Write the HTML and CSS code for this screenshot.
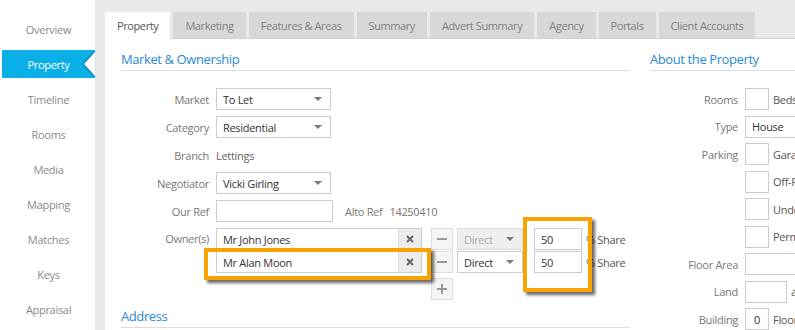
FILE: index.html
```html
<!DOCTYPE html>
<html lang="en">
<head>
    <meta charset="UTF-8">
    <meta name="viewport" content="width=device-width, initial-scale=1.0">
    <title>Property - Alto</title>
    <link rel="stylesheet" href="styles.css">
</head>
<body>
    <div class="app">
        <nav class="sidebar">
            <a href="#" class="side-item">Overview</a>
            <a href="#" class="side-item active">Property</a>
            <a href="#" class="side-item">Timeline</a>
            <a href="#" class="side-item">Rooms</a>
            <a href="#" class="side-item">Media</a>
            <a href="#" class="side-item">Mapping</a>
            <a href="#" class="side-item">Matches</a>
            <a href="#" class="side-item">Keys</a>
            <a href="#" class="side-item">Appraisal</a>
        </nav>

        <main class="main">
            <div class="tabs">
                <a href="#" class="tab active">Property</a>
                <a href="#" class="tab">Marketing</a>
                <a href="#" class="tab">Features &amp; Areas</a>
                <a href="#" class="tab">Summary</a>
                <a href="#" class="tab">Advert Summary</a>
                <a href="#" class="tab">Agency</a>
                <a href="#" class="tab">Portals</a>
                <a href="#" class="tab">Client Accounts</a>
            </div>

            <div class="panel">
                <section class="col col-left">
                    <h2 class="section-title">Market &amp; Ownership</h2>

                    <div class="row">
                        <span class="label">Market</span>
                        <div class="field select">To Let</div>
                    </div>
                    <div class="row">
                        <span class="label">Category</span>
                        <div class="field select">Residential</div>
                    </div>
                    <div class="row">
                        <span class="label">Branch</span>
                        <span class="value">Lettings</span>
                    </div>
                    <div class="row">
                        <span class="label">Negotiator</span>
                        <div class="field select">Vicki Girling</div>
                    </div>
                    <div class="row">
                        <span class="label">Our Ref</span>
                        <div class="field ref"></div>
                        <span class="alto-ref">Alto Ref</span>
                        <span class="alto-num">14250410</span>
                    </div>

                    <div class="row owners-row">
                        <span class="label">Owner(s)</span>
                        <div class="owners">
                            <div class="owner-line">
                                <div class="owner-input">
                                    <span class="owner-text">Mr John Jones</span>
                                    <span class="clear-btn">
                                        <svg width="8" height="8" viewBox="0 0 8 8"><path d="M1 1L7 7M7 1L1 7" stroke="#666" stroke-width="2"/></svg>
                                    </span>
                                </div>
                                <span class="icon-btn"><span class="minus"></span></span>
                                <div class="field select direct disabled">Direct</div>
                                <div class="field share">50</div>
                                <span class="share-label">% Share</span>
                            </div>
                            <div class="owner-line">
                                <div class="owner-input">
                                    <span class="owner-text">Mr Alan Moon</span>
                                    <span class="clear-btn">
                                        <svg width="8" height="8" viewBox="0 0 8 8"><path d="M1 1L7 7M7 1L1 7" stroke="#666" stroke-width="2"/></svg>
                                    </span>
                                </div>
                                <span class="icon-btn"><span class="minus"></span></span>
                                <div class="field select direct">Direct</div>
                                <div class="field share">50</div>
                                <span class="share-label">% Share</span>
                            </div>
                            <div class="owner-line add-line">
                                <span class="icon-btn"><span class="minus"></span><span class="plus-bar"></span></span>
                            </div>

                            <div class="highlight hl-owner"></div>
                            <div class="highlight hl-share"></div>
                        </div>
                    </div>

                    <h2 class="section-title address-title">Address</h2>
                </section>

                <section class="col col-right">
                    <h2 class="section-title">About the Property</h2>

                    <div class="row">
                        <span class="label">Rooms</span>
                        <div class="field box"></div>
                        <span class="after">Beds</span>
                    </div>
                    <div class="row">
                        <span class="label">Type</span>
                        <div class="field wide">House</div>
                    </div>
                    <div class="row">
                        <span class="label">Parking</span>
                        <div class="field box"></div>
                        <span class="after">Garage</span>
                    </div>
                    <div class="row">
                        <span class="label"></span>
                        <div class="field box"></div>
                        <span class="after">Off-Road</span>
                    </div>
                    <div class="row">
                        <span class="label"></span>
                        <div class="field box"></div>
                        <span class="after">Underground</span>
                    </div>
                    <div class="row">
                        <span class="label"></span>
                        <div class="field box"></div>
                        <span class="after">Permit</span>
                    </div>
                    <div class="row">
                        <span class="label">Floor Area</span>
                        <div class="field wide"></div>
                    </div>
                    <div class="row">
                        <span class="label">Land</span>
                        <div class="field land"></div>
                        <span class="after">acres</span>
                    </div>
                    <div class="row">
                        <span class="label">Building</span>
                        <div class="field box centered">0</div>
                        <span class="after">Floors</span>
                    </div>
                </section>
            </div>
        </main>
    </div>
</body>
</html>
```

FILE: styles.css
```css
* {
    margin: 0;
    padding: 0;
    box-sizing: border-box;
}

body {
    font-family: "Open Sans", "Noto Sans", sans-serif;
    font-size: 11px;
    letter-spacing: -0.3px;
    color: #444;
    background: #e9e9e9;
    overflow: hidden;
}

a {
    text-decoration: none;
}

.app {
    display: flex;
    height: 330px;
}

/* left navigation */
.sidebar {
    width: 95px;
    flex-shrink: 0;
    background: white;
    padding: 15px 0 0 2px;
}

.side-item {
    position: relative;
    display: flex;
    align-items: center;
    justify-content: center;
    height: 28px;
    margin-bottom: 7px;
    color: #8a8a8a;
}

.side-item.active {
    background: #0bafe8;
    color: white;
}

.side-item.active::after {
    content: "";
    position: absolute;
    right: 0;
    top: 2px;
    border-style: solid;
    border-width: 12px 11px 12px 0;
    border-color: transparent white transparent transparent;
    filter: drop-shadow(-1px 0 1px rgba(0, 40, 80, 0.55));
}

/* main area */
.main {
    flex: 1;
    min-width: 0;
    display: flex;
    flex-direction: column;
    padding: 12px 0 0 10px;
    background: #e9e9e9;
}

.tabs {
    display: flex;
    gap: 3px;
    height: 26px;
    position: relative;
    z-index: 1;
}

.tab {
    padding: 0 12px;
    line-height: 27px;
    letter-spacing: -0.4px;
    background: #d8d8d8;
    color: #808080;
    white-space: nowrap;
}

.tab.active {
    background: white;
    color: #555;
    height: 27px;
}

.panel {
    flex: 1;
    display: flex;
    background: white;
    border-top: 1px solid #cfcfcf;
    padding: 9px 0 0 16px;
    overflow: hidden;
}

.col {
    flex-shrink: 0;
}

.col-left {
    width: 509px;
}

.col-right {
    width: 230px;
    margin-left: 20px;
}

.section-title {
    font-size: 13px;
    font-weight: normal;
    letter-spacing: -0.4px;
    line-height: 22px;
    color: #2b8ad3;
    border-bottom: 1px solid #ddd;
    margin-bottom: 17px;
}

.address-title {
    margin-top: 4px;
}

/* form rows */
.row {
    display: flex;
    align-items: center;
    height: 22px;
    margin-bottom: 6px;
}

.col-right .row {
    margin-bottom: 5.5px;
}

.label {
    width: 95px;
    flex-shrink: 0;
    padding-right: 7px;
    text-align: right;
    color: #777;
}

.value {
    color: #666;
}

.field {
    position: relative;
    display: flex;
    align-items: center;
    height: 22px;
    padding: 0 6px;
    border: 1px solid #ccc;
    background: white;
    color: #333;
    white-space: nowrap;
}

.select {
    width: 115px;
}

.select::after {
    content: "";
    position: absolute;
    right: 8px;
    top: 8px;
    border-left: 4px solid transparent;
    border-right: 4px solid transparent;
    border-top: 4px solid #777;
}

.ref {
    width: 117px;
}

.alto-ref {
    margin-left: 12px;
    color: #777;
}

.alto-num {
    margin-left: 7px;
    color: #777;
}

/* owners */
.owners-row {
    height: auto;
    align-items: flex-start;
    margin-bottom: 4px;
}

.owners-row .label {
    line-height: 22px;
}

.owners {
    position: relative;
}

.owner-line {
    display: flex;
    align-items: center;
    height: 22px;
    margin-bottom: 1px;
}

.add-line {
    margin-top: 5px;
    padding-left: 206px;
}

.owner-input {
    display: flex;
    width: 206px;
    height: 22px;
    border: 1px solid #ccc;
}

.owner-text {
    flex: 1;
    display: flex;
    align-items: center;
    padding: 0 6px;
    color: #333;
}

.clear-btn {
    width: 23px;
    display: flex;
    align-items: center;
    justify-content: center;
    background: #ececec;
    border-left: 1px solid #ddd;
}

.icon-btn {
    position: relative;
    width: 22px;
    height: 22px;
    margin-left: 9px;
    display: flex;
    align-items: center;
    justify-content: center;
    background: #f5f5f5;
    border: 1px solid #ddd;
}

.minus {
    width: 10px;
    height: 2px;
    background: #999;
}

.plus-bar {
    position: absolute;
    left: 9px;
    top: 5px;
    width: 2px;
    height: 10px;
    background: #999;
}

.direct {
    width: 66px;
    margin-left: 4px;
}

.direct.disabled {
    background: #eee;
    border-color: #ddd;
    color: #aaa;
}

.share {
    width: 48px;
    margin-left: 11px;
}

.share-label {
    margin-left: 4px;
    color: #555;
}

.highlight {
    position: absolute;
    border: 4px solid #f7a400;
    box-shadow: 3px 3px 3px rgba(0, 0, 0, 0.6);
    pointer-events: none;
}

.hl-owner {
    left: -12px;
    top: 20px;
    width: 227px;
    height: 32px;
}

.hl-share {
    left: 307px;
    top: -11px;
    width: 69px;
    height: 75px;
}

/* about the property */
.box {
    width: 24px;
    padding: 0;
}

.box.centered {
    justify-content: center;
}

.wide {
    width: 115px;
}

.land {
    width: 42px;
}

.after {
    margin-left: 4px;
    color: #555;
    white-space: nowrap;
}
```
